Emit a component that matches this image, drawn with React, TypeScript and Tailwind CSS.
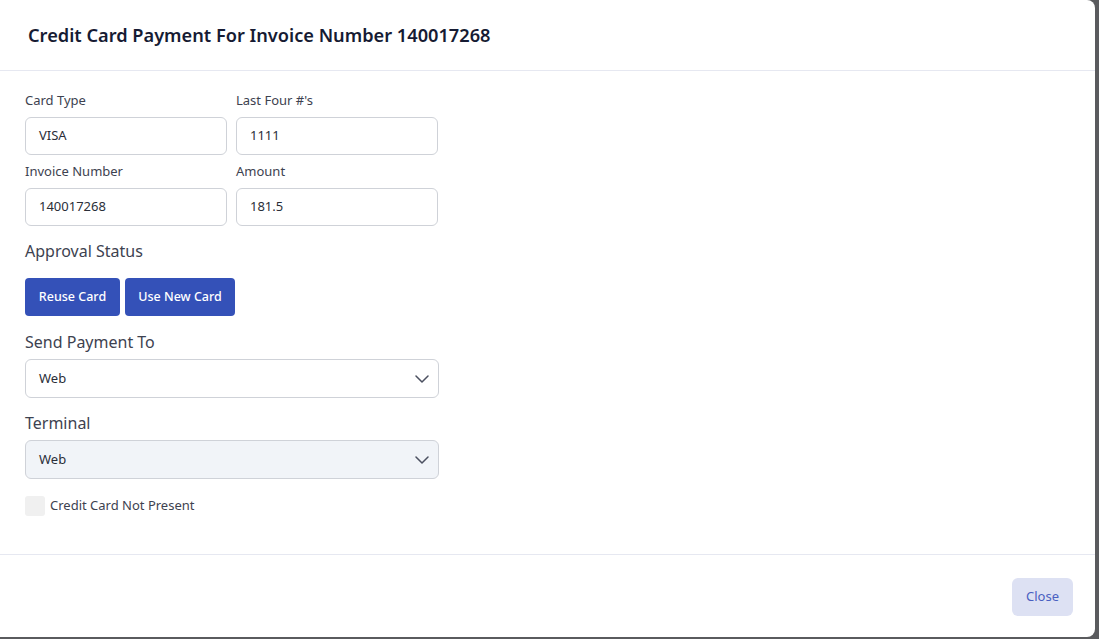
import React from "react";

const font = { fontFamily: '"Noto Sans", "Open Sans", sans-serif' };

function Field({ label, value }: { label: string; value: string }) {
  return (
    <div className="flex flex-col w-[202px]">
      <div className="text-[13px] leading-[16px] text-[#3d4250] mt-[2px] mb-[9px]">{label}</div>
      <div className="h-[38px] border border-[#cfd2d8] rounded-[6px] flex items-center pl-[13px] text-[13px] text-[#2a2e38]">
        {value}
      </div>
    </div>
  );
}

function Chevron() {
  return (
    <svg width="14" height="8" viewBox="0 0 14 8" fill="none">
      <path d="M1 1l6 6 6-6" stroke="#4b5060" strokeWidth="1.5" strokeLinecap="round" strokeLinejoin="round" />
    </svg>
  );
}

function Select({ value, bg }: { value: string; bg: string }) {
  return (
    <div className={`h-[39px] w-[414px] border border-[#cfd2d8] rounded-[6px] flex items-center justify-between pl-[13px] pr-[9px] text-[13px] text-[#2a2e38] ${bg}`}>
      <span>{value}</span>
      <Chevron />
    </div>
  );
}

export default function App() {
  return (
    <div className="w-full h-[639px] bg-[#5a5b5e] flex overflow-hidden" style={font}>
      <div className="w-[1095px] h-[637px] bg-white rounded-r-[8px] flex flex-col shrink-0">
        <div className="h-[71px] border-b border-[#e6e8f1] flex items-center pl-[28px] pt-[2px] shrink-0">
          <h1 className="text-[18.2px] font-semibold text-[#161b33]">
            Credit Card Payment For Invoice Number 140017268
          </h1>
        </div>
        <div className="flex-1 px-[25px] pt-[19px] flex flex-col border-b border-[#e6e8f1]">
          <div className="flex gap-[9px]">
            <Field label="Card Type" value="VISA" />
            <Field label="Last Four #'s" value="1111" />
          </div>
          <div className="flex gap-[9px] mt-[6px]">
            <Field label="Invoice Number" value="140017268" />
            <Field label="Amount" value="181.5" />
          </div>
          <div className="text-[16px] leading-[20px] text-[#3d4250] mt-[15px]">Approval Status</div>
          <div className="flex gap-[5px] mt-[17px]">
            <button className="h-[38px] w-[95px] rounded-[4px] bg-[#3451b8] text-white text-[12.5px] font-medium">Reuse Card</button>
            <button className="h-[38px] w-[110px] rounded-[4px] bg-[#3451b8] text-white text-[12.5px] font-medium">Use New Card</button>
          </div>
          <div className="text-[16px] leading-[20px] text-[#3d4250] mt-[16px] mb-[7px]">Send Payment To</div>
          <Select value="Web" bg="bg-white" />
          <div className="text-[16px] leading-[20px] text-[#3d4250] mt-[15px] mb-[7px]">Terminal</div>
          <Select value="Web" bg="bg-[#f1f4f8]" />
          <div className="flex items-center gap-[5px] mt-[17px]">
            <div className="w-[20px] h-[20px] rounded-[3px] bg-[#f0f0f0]" />
            <span className="text-[13px] text-[#3d4250]">Credit Card Not Present</span>
          </div>
        </div>
        <div className="h-[82px] shrink-0 flex items-center justify-end pr-[22px] pt-[2px]">
          <button className="h-[38px] w-[61px] rounded-[6px] bg-[#dde1f3] text-[#4a5fc1] text-[13px]">Close</button>
        </div>
      </div>
    </div>
  );
}
